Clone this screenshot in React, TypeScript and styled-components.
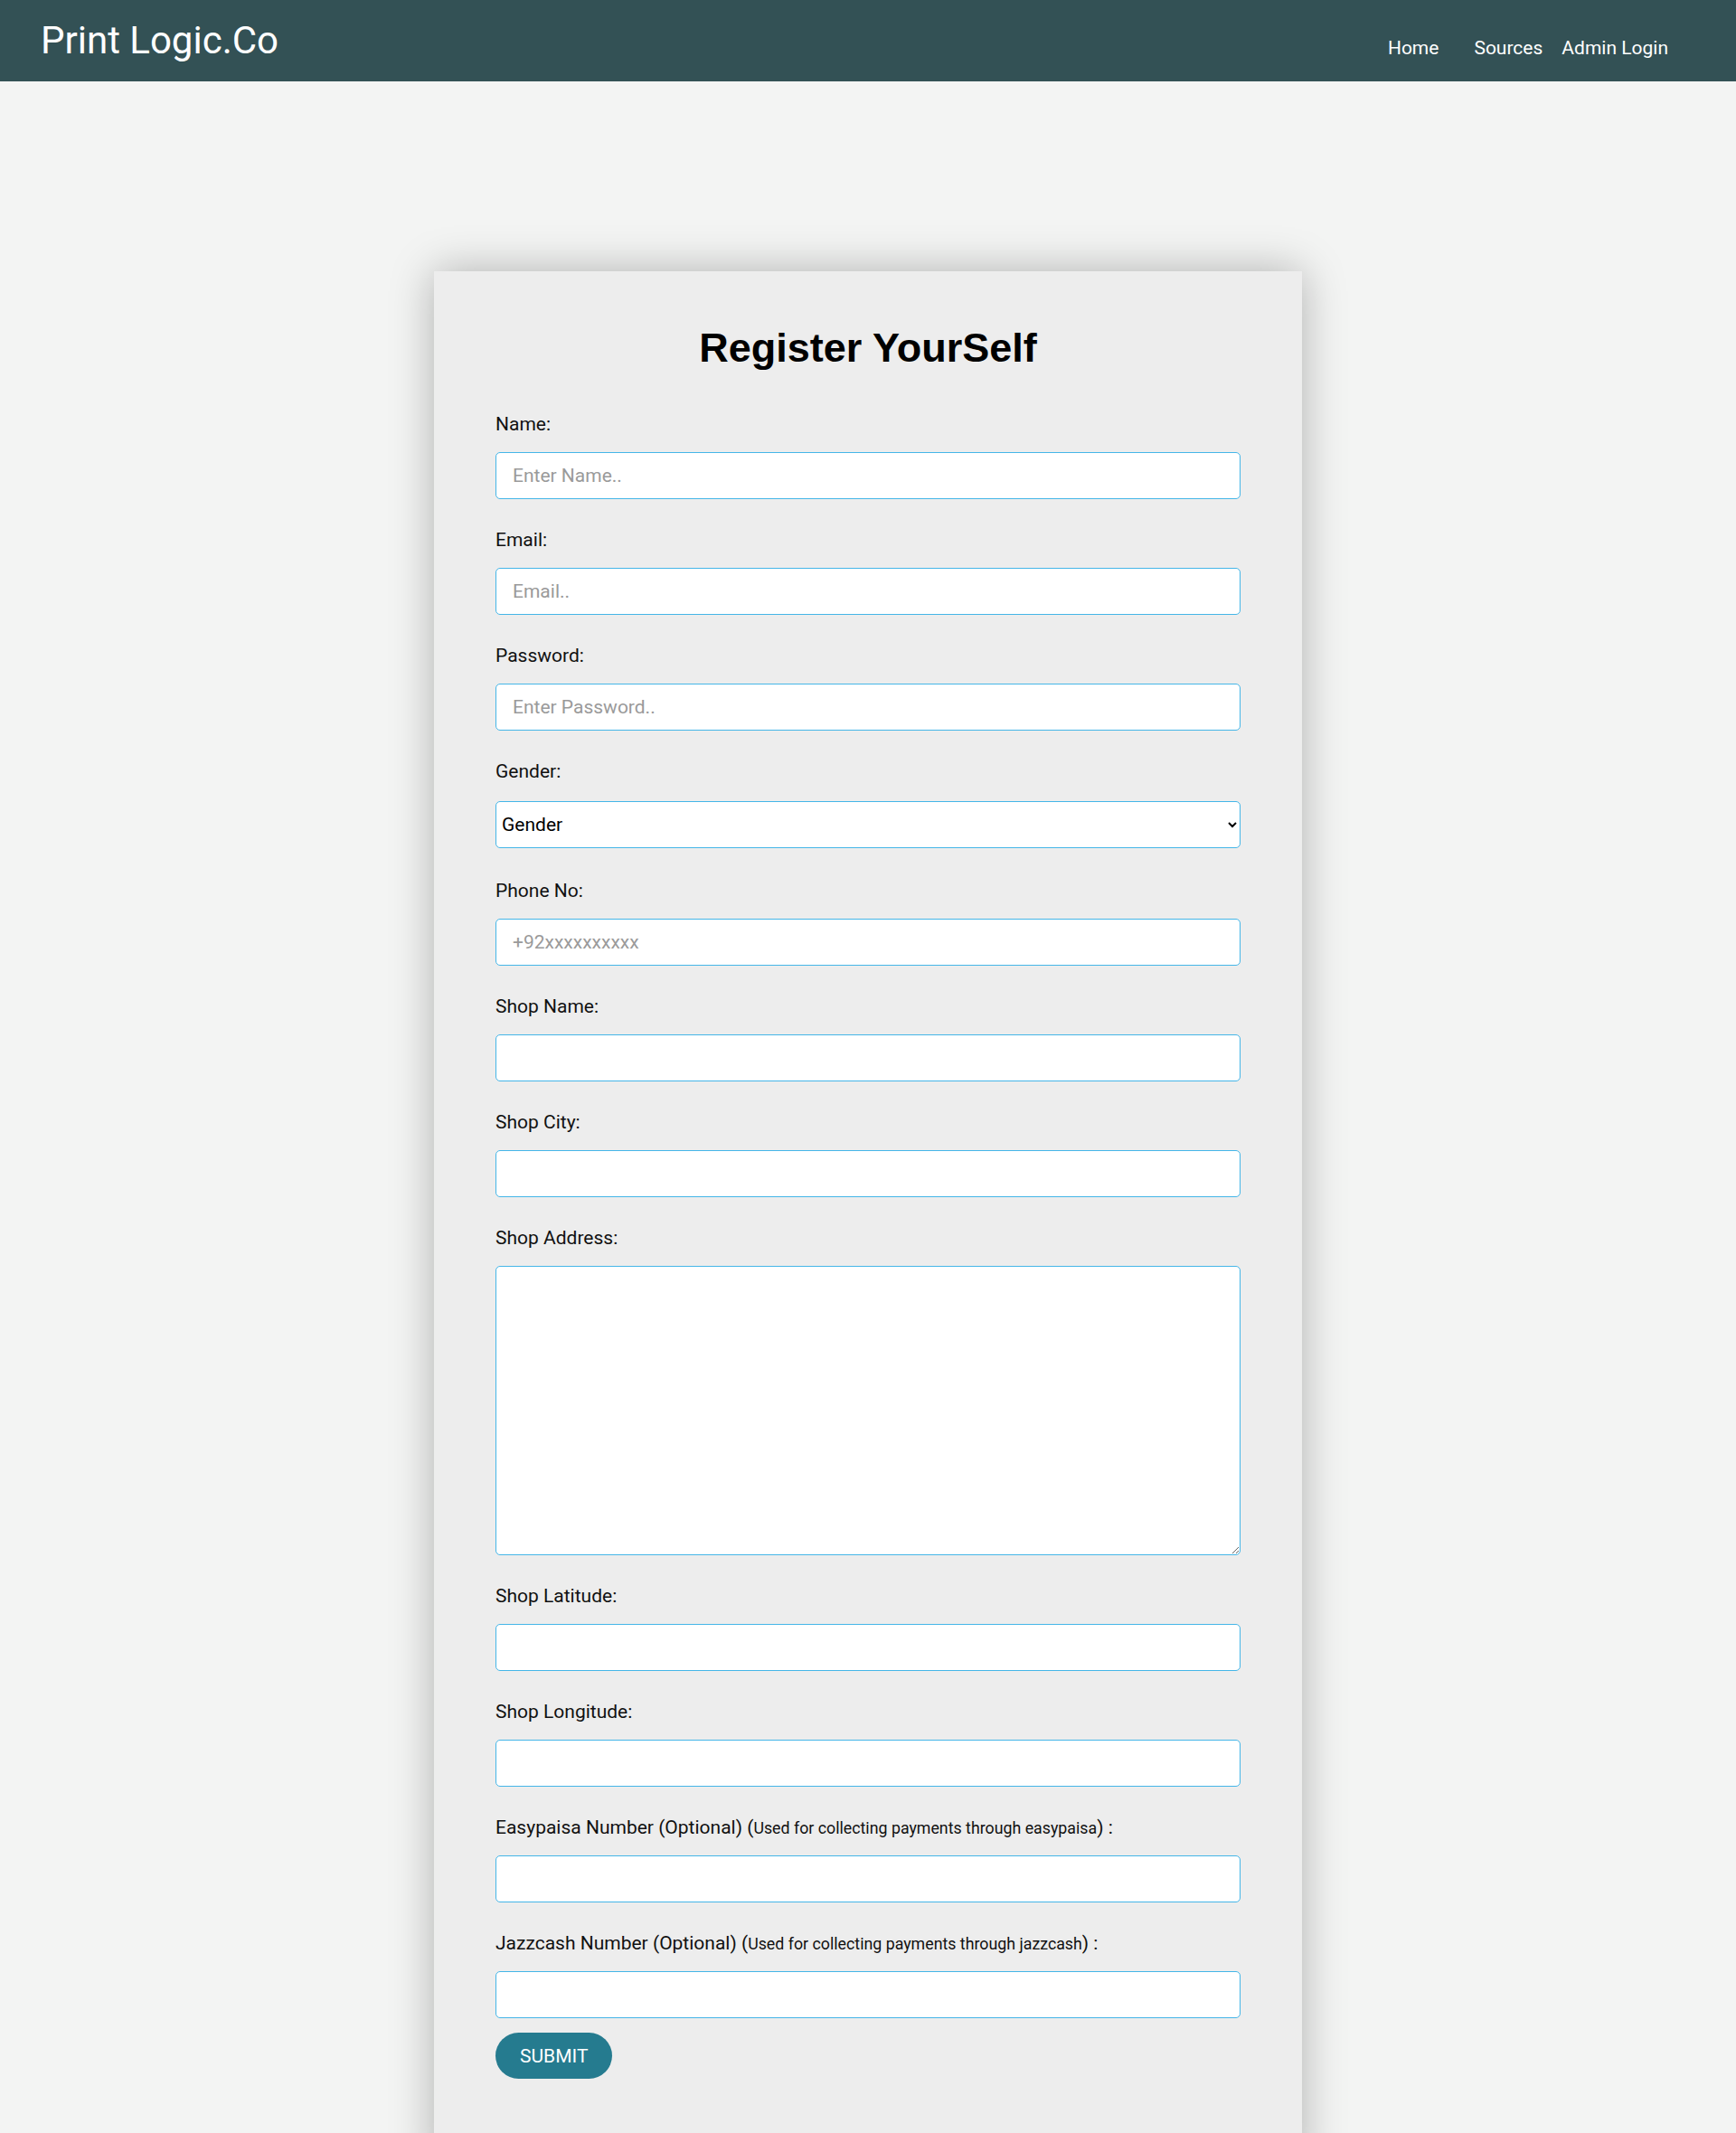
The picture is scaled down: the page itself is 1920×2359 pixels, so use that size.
import styled, { createGlobalStyle } from 'styled-components';

const GlobalStyle = createGlobalStyle`
  body {
    margin: 0;
    background: #f3f4f3;
    font-family: Roboto, 'Liberation Sans', sans-serif;
  }
  * {
    box-sizing: border-box;
  }
`;

// top bar
const Header = styled.header`
  display: flex;
  justify-content: space-between;
  align-items: flex-start;
  height: 90px;
  padding: 0 75px 0 45px;
  background: #335155;
  color: #ffffff;
`;

const Logo = styled.div`
  margin-top: 20px;
  font-size: 42px;
  font-weight: 400;
`;

const Nav = styled.nav`
  display: flex;
  margin-top: 41px;
`;

const NavLink = styled.a<{ $space: number }>`
  margin-right: ${(p) => p.$space}px;
  font-size: 21px;
  color: #ffffff;
  text-decoration: none;
`;

// register card
const Card = styled.div`
  width: 960px;
  margin: 210px auto 0;
  padding: 59px 68px 100px;
  background: #ededed;
  box-shadow: 0 0 45px rgba(0, 0, 0, 0.28);
`;

const Title = styled.h1`
  margin: 0 0 46px;
  font-family: 'Liberation Sans', Arial, sans-serif;
  font-size: 45px;
  font-weight: 700;
  text-align: center;
  color: #000000;
`;

const Field = styled.div`
  display: flow-root;
  margin-bottom: 33px;

  &:last-child {
    margin-bottom: 16px;
  }
`;

const Label = styled.label`
  display: block;
  font-size: 21px;
  line-height: 25px;
  color: #111111;
`;

const Hint = styled.span`
  font-size: 17.8px;
`;

const TextInput = styled.input`
  display: block;
  width: 100%;
  height: 52px;
  margin-top: 18px;
  padding: 0 18px;
  border: 1px solid #45b6e8;
  border-radius: 5px;
  background: #ffffff;
  font-family: Roboto, sans-serif;
  font-size: 21px;
  color: #222222;
  outline: none;

  &::placeholder {
    color: #9a9a9a;
  }
`;

const Select = styled.select`
  display: block;
  width: 100%;
  height: 52px;
  margin: 20px 0 2px;
  padding: 0 10px 0 2px;
  border: 1px solid #45b6e8;
  border-radius: 5px;
  background: #ffffff;
  font-family: Roboto, sans-serif;
  font-size: 21px;
  color: #000000;
`;

const TextArea = styled.textarea`
  display: block;
  width: 100%;
  height: 320px;
  margin-top: 18px;
  padding: 12px 18px;
  border: 1px solid #45b6e8;
  border-radius: 5px;
  background: #ffffff;
  font-family: Roboto, sans-serif;
  font-size: 21px;
  outline: none;
`;

const SubmitButton = styled.button`
  height: 51px;
  padding: 0 27px;
  border: none;
  border-radius: 26px;
  background: #257b8f;
  color: #ffffff;
  font-family: Roboto, sans-serif;
  font-size: 21px;
  cursor: pointer;
`;

const fields = [
  { label: 'Name:', placeholder: 'Enter Name..' },
  { label: 'Email:', placeholder: 'Email..' },
  { label: 'Password:', placeholder: 'Enter Password..', type: 'password' },
];

const shopFields = ['Shop Name:', 'Shop City:'];

const App = () => {
  return (
    <>
      <GlobalStyle />
      <Header>
        <Logo>Print Logic.Co</Logo>
        <Nav>
          <NavLink href="#" $space={39}>
            Home
          </NavLink>
          <NavLink href="#" $space={21}>
            Sources
          </NavLink>
          <NavLink href="#" $space={0}>
            Admin Login
          </NavLink>
        </Nav>
      </Header>

      <Card>
        <Title>Register YourSelf</Title>
        <form onSubmit={(e) => e.preventDefault()}>
          <div>
            {fields.map((f) => (
              <Field key={f.label}>
                <Label>{f.label}</Label>
                <TextInput type={f.type || 'text'} placeholder={f.placeholder} />
              </Field>
            ))}
            <Field>
              <Label>Gender:</Label>
              <Select defaultValue="">
                <option value="">Gender</option>
                <option value="male">Male</option>
                <option value="female">Female</option>
              </Select>
            </Field>
            <Field>
              <Label>Phone No:</Label>
              <TextInput type="text" placeholder="+92xxxxxxxxxx" />
            </Field>
            {shopFields.map((l) => (
              <Field key={l}>
                <Label>{l}</Label>
                <TextInput type="text" />
              </Field>
            ))}
            <Field>
              <Label>Shop Address:</Label>
              <TextArea />
            </Field>
            <Field>
              <Label>Shop Latitude:</Label>
              <TextInput type="text" />
            </Field>
            <Field>
              <Label>Shop Longitude:</Label>
              <TextInput type="text" />
            </Field>
            <Field>
              <Label>
                Easypaisa Number (Optional) (
                <Hint>Used for collecting payments through easypaisa</Hint>) :
              </Label>
              <TextInput type="text" />
            </Field>
            <Field>
              <Label>
                Jazzcash Number (Optional) (
                <Hint>Used for collecting payments through jazzcash</Hint>) :
              </Label>
              <TextInput type="text" />
            </Field>
          </div>
          <SubmitButton type="submit">SUBMIT</SubmitButton>
        </form>
      </Card>
    </>
  );
};

export default App;
